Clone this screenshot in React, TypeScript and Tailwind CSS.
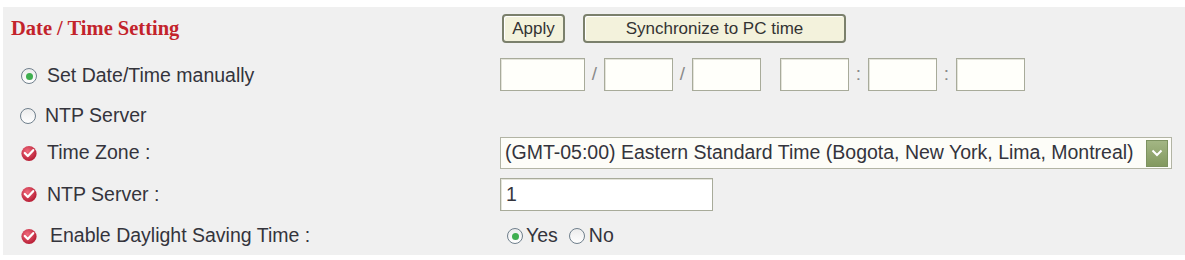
import React from 'react';

const font = { fontFamily: '"Liberation Sans", Arial, sans-serif' };

const CheckBadge = () => (
  <svg width="18" height="17" viewBox="0 0 18 17" className="shrink-0">
    <defs>
      <radialGradient id="rb" cx="40%" cy="35%" r="70%">
        <stop offset="0%" stopColor="#f06a7c" />
        <stop offset="100%" stopColor="#b3182f" />
      </radialGradient>
    </defs>
    <circle cx="9" cy="8.5" r="7.6" fill="url(#rb)" />
    <path d="M4.8 8 L7.8 11 L13.2 5.2" fill="none" stroke="#fff" strokeWidth="2.3" strokeLinecap="round" strokeLinejoin="round" />
  </svg>
);

const Radio = ({ checked }: { checked?: boolean }) => (
  <span className="flex h-[16px] w-[16px] shrink-0 items-center justify-center rounded-full border-[1.5px] border-[#6f7f8c] bg-gradient-to-b from-[#ececec] to-white">
    {checked && <span className="h-[7px] w-[7px] rounded-full bg-[#3fae4f]" />}
  </span>
);

const Box = ({ w }: { w: string }) => (
  <div className={`${w} h-[33px] border border-[#a8ab9a] bg-[#fffffa] shadow-[inset_1px_1px_0_#e4e4da]`} />
);

const Sep = ({ c }: { c: string }) => (
  <span className="w-[19px] text-center text-[19px] text-[#8a8a8a]">{c}</span>
);

const Btn = ({ children, w }: { children: React.ReactNode; w: string }) => (
  <button
    className={`${w} h-[29px] rounded-[4px] border-2 border-[#7b806c] bg-[#f3f2dc] text-[17px] leading-none text-[#333] shadow-[inset_1px_1px_0_#fff]`}
  >
    {children}
  </button>
);

export default function App() {
  return (
    <div className="w-[1185px] h-[260px] bg-white pt-[7px] pl-[3px]" style={font}>
      <div className="bg-[#f0f0f0] h-[248px] text-[19.5px] text-[#34343c]">
        {/* Title + buttons */}
        <div className="flex h-[43px] items-center">
          <div className="w-[497px] pl-[8px]">
            <span className="text-[20.5px] font-bold text-[#c3232b]" style={{ fontFamily: '"Liberation Serif", "Times New Roman", serif' }}>
              Date / Time Setting
            </span>
          </div>
          <div className="flex items-center gap-[18px] pl-[2px]">
            <Btn w="w-[63px]">Apply</Btn>
            <Btn w="w-[263px]">Synchronize to PC time</Btn>
          </div>
        </div>

        {/* Manual */}
        <div className="flex h-[48px] items-center">
          <div className="flex w-[497px] items-center gap-[10px] pl-[18px] pt-[4px]">
            <Radio checked />
            <span>Set Date/Time manually</span>
          </div>
          <div className="flex items-center">
            <Box w="w-[85px]" />
            <Sep c="/" />
            <Box w="w-[69px]" />
            <Sep c="/" />
            <Box w="w-[69px]" />
            <span className="w-[19px]" />
            <Box w="w-[69px]" />
            <Sep c=":" />
            <Box w="w-[69px]" />
            <Sep c=":" />
            <Box w="w-[69px]" />
          </div>
        </div>

        {/* NTP radio */}
        <div className="flex h-[36px] items-center">
          <div className="flex w-[497px] items-center gap-[9px] pl-[17px]">
            <Radio />
            <span>NTP Server</span>
          </div>
        </div>

        {/* Time zone */}
        <div className="flex h-[38px] items-center">
          <div className="flex w-[497px] items-center gap-[9px] pl-[17px]">
            <CheckBadge />
            <span>Time Zone :</span>
          </div>
          <div className="flex h-[32px] w-[672px] items-center justify-between border border-[#b2b4a4] bg-[#fdfdf8] pl-[4px] pr-[3px]">
            <span>(GMT-05:00) Eastern Standard Time (Bogota, New York, Lima, Montreal)</span>
            <span className="flex h-[27px] w-[22px] items-center justify-center border border-[#7d9260] bg-gradient-to-b from-[#a3b684] to-[#83995f]">
              <svg width="12" height="8" viewBox="0 0 12 8">
                <path d="M1.5 1.5 L6 6 L10.5 1.5" fill="none" stroke="#fff" strokeWidth="2" />
              </svg>
            </span>
          </div>
        </div>

        {/* NTP server */}
        <div className="flex h-[45px] items-center">
          <div className="flex w-[497px] items-center gap-[9px] pl-[17px]">
            <CheckBadge />
            <span>NTP Server :</span>
          </div>
          <div className="flex h-[33px] w-[213px] items-center border border-[#a8ab9a] bg-white pl-[5px] shadow-[inset_1px_1px_0_#e4e4da]">
            1
          </div>
        </div>

        {/* DST */}
        <div className="flex h-[38px] items-center">
          <div className="flex w-[497px] items-center gap-[12px] pl-[17px]">
            <CheckBadge />
            <span>Enable Daylight Saving Time :</span>
          </div>
          <div className="flex items-center pl-[7px]">
            <Radio checked />
            <span className="ml-[3px]">Yes</span>
            <span className="ml-[11px]">
              <Radio />
            </span>
            <span className="ml-[4px]">No</span>
          </div>
        </div>
      </div>
    </div>
  );
}
